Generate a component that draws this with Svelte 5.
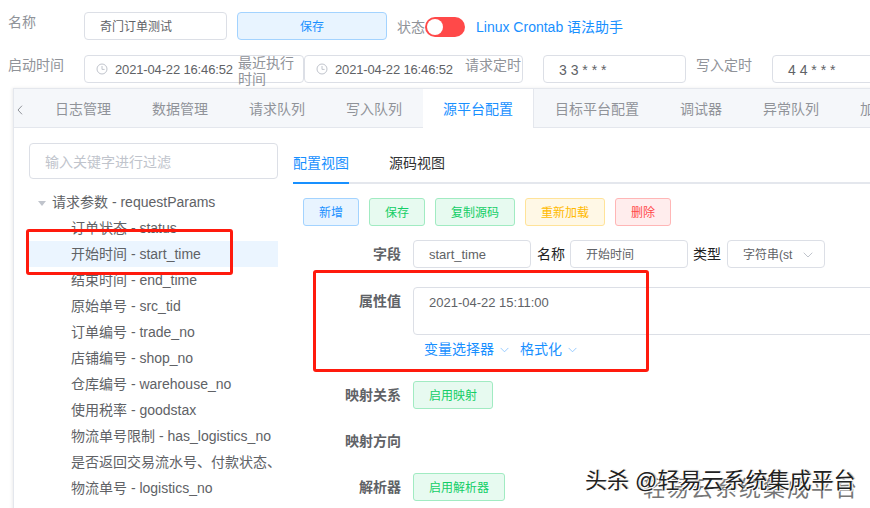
<script>
  const tabs = ['日志管理', '数据管理', '请求队列', '写入队列', '源平台配置', '目标平台配置', '调试器', '异常队列', '加密配置'];
  const activeTab = '源平台配置';
  const params = [
    '订单状态 - status',
    '开始时间 - start_time',
    '结束时间 - end_time',
    '原始单号 - src_tid',
    '订单编号 - trade_no',
    '店铺编号 - shop_no',
    '仓库编号 - warehouse_no',
    '使用税率 - goodstax',
    '物流单号限制 - has_logistics_no',
    '是否返回交易流水号、付款状态、',
    '物流单号 - logistics_no'
  ];
  const actions = [
    { text: '新增', kind: 'blue' },
    { text: '保存', kind: 'green' },
    { text: '复制源码', kind: 'green' },
    { text: '重新加载', kind: 'yellow' },
    { text: '删除', kind: 'red' }
  ];
</script>

{#snippet clock()}
  <svg class="clock" viewBox="0 0 12 12" width="12" height="12">
    <circle cx="6" cy="6" r="5" fill="none" stroke="#c0c4cc" />
    <path d="M6 3V6.4H8.6" fill="none" stroke="#c0c4cc" />
  </svg>
{/snippet}

{#snippet chevron()}
  <svg class="chev" viewBox="0 0 10 6" width="10" height="6">
    <path d="M0.7 0.7L5 5L9.3 0.7" fill="none" stroke="currentColor" />
  </svg>
{/snippet}

<main>
  <div class="row first">
    <span class="label">名称</span>
    <div class="input name">奇门订单测试</div>
    <button class="save">保存</button>
    <span class="status">状态</span>
    <span class="switch"><i></i></span>
    <a class="helper" href="#top">Linux Crontab 语法助手</a>
  </div>

  <div class="row second">
    <span class="label">启动时间</span>
    <div class="input date">
      {@render clock()}2021-04-22 16:46:52
      <span class="over two">最近执行时间</span>
    </div>
    <div class="input date next">
      {@render clock()}2021-04-22 16:46:52
      <span class="over">请求定时</span>
    </div>
    <div class="input cron">3 3 * * *</div>
    <span class="label write">写入定时</span>
    <div class="input cron last">4 4 * * *</div>
  </div>

  <section class="panel">
    <div class="tabbar">
      <svg class="prev" viewBox="0 0 6 10" width="6" height="10">
        <path d="M5 0.7L1 5L5 9.3" fill="none" stroke="#909399" />
      </svg>
      {#each tabs as tab}
        <span class="tab" class:active={tab === activeTab}>{tab}</span>
      {/each}
    </div>

    <div class="body">
      <aside>
        <div class="search">输入关键字进行过滤</div>
        <div class="node root"><i class="caret"></i>请求参数 - requestParams</div>
        {#each params as p, i}
          <div class="node" class:current={i === 1}>{p}</div>
        {/each}
      </aside>

      <div class="config">
        <div class="views">
          <span class="view on">配置视图</span>
          <span class="view">源码视图</span>
        </div>

        <div class="actions">
          {#each actions as a}
            <button class="btn {a.kind}">{a.text}</button>
          {/each}
        </div>

        <div class="field fields">
          <span class="key">字段</span>
          <div class="input small w118 latin">start_time</div>
          <span class="inline">名称</span>
          <div class="input small w118">开始时间</div>
          <span class="inline type">类型</span>
          <div class="input small select">字符串(st{@render chevron()}</div>
        </div>

        <div class="field value">
          <span class="key">属性值</span>
          <div class="valuebox">
            <div class="area">2021-04-22 15:11:00</div>
            <div class="links">
              <span>变量选择器{@render chevron()}</span>
              <span>格式化{@render chevron()}</span>
            </div>
          </div>
        </div>

        <div class="field mapping">
          <span class="key">映射关系</span>
          <button class="btn green">启用映射</button>
        </div>
        <div class="field direction">
          <span class="key">映射方向</span>
        </div>
        <div class="field parser">
          <span class="key">解析器</span>
          <button class="btn green">启用解析器</button>
        </div>
      </div>
    </div>
  </section>

  <div class="mark box-left"></div>
  <div class="mark box-right"></div>
  <div class="ghost">轻易云系统集成平台</div>
  <div class="watermark">头杀 @轻易云系统集成平台</div>
</main>

<style>
  :global(body) {
    margin: 0;
    background: #fff;
    overflow: hidden;
  }

  main {
    position: relative;
    width: 870px;
    height: 508px;
    overflow: hidden;
    font-family: "Liberation Sans", "Noto Sans CJK SC", sans-serif;
    font-size: 14px;
    color: #606266;
  }

  button {
    font: inherit;
    cursor: pointer;
  }

  .row {
    display: flex;
    align-items: flex-start;
    height: 28px;
    padding-left: 8px;
    white-space: nowrap;
  }

  .first {
    padding-top: 12px;
  }

  .second {
    margin-top: 15px;
  }

  .label {
    width: 76px;
    flex: none;
    line-height: 20px;
    color: #909399;
  }

  .input {
    position: relative;
    flex: none;
    box-sizing: border-box;
    height: 28px;
    line-height: 26px;
    border: 1px solid #dcdfe6;
    border-radius: 4px;
    background: #fff;
    display: flex;
    align-items: center;
  }

  .name {
    width: 143px;
    padding: 2px 0 0 15px;
    font-size: 12px;
  }

  .save {
    width: 150px;
    height: 28px;
    margin-left: 10px;
    padding: 0 0 2px;
    border: 1px solid #a3d3ff;
    border-radius: 4px;
    background: #e8f4ff;
    color: #1890ff;
    font-size: 12px;
  }

  .status {
    margin-left: 10px;
    line-height: 30px;
    color: #909399;
  }

  .switch {
    display: block;
    position: relative;
    width: 40px;
    height: 20px;
    margin-top: 5px;
    border-radius: 10px;
    background: #ff4949;
  }

  .switch i {
    position: absolute;
    left: 2px;
    top: 2px;
    width: 16px;
    height: 16px;
    border-radius: 50%;
    background: #fff;
  }

  .helper {
    margin-left: 11px;
    line-height: 30px;
    color: #1890ff;
    text-decoration: none;
  }

  .date {
    width: 220px;
    padding: 2px 0 0 11px;
    font-size: 13px;
    letter-spacing: -0.15px;
  }

  .next {
    width: 219px;
  }

  .clock {
    margin: -2px 7px 0 0;
    flex: none;
  }

  .over {
    position: absolute;
    right: 1px;
    top: -1px;
    width: 56px;
    font-size: 14px;
    letter-spacing: 0;
    line-height: 20px;
    color: #909399;
  }

  .over.two {
    white-space: normal;
    line-height: 16px;
    left: 153px;
    right: auto;
    width: 57px;
  }

  .cron {
    width: 143px;
    margin-left: 20px;
    padding: 1px 0 0 15px;
  }

  .write {
    width: 66px;
    margin-left: 10px;
    margin-right: 10px;
  }

  .cron.last {
    width: 140px;
    margin-left: 0;
  }

  .panel {
    box-sizing: border-box;
    width: 900px;
    height: 500px;
    margin-top: 5px;
    margin-left: 13px;
    border-left: 1px solid #e4e7ed;
    box-shadow: -1px 0 3px rgba(0, 0, 0, 0.08);
  }

  .tabbar {
    box-sizing: border-box;
    display: flex;
    height: 40px;
    padding-left: 21px;
    position: relative;
    background: #f5f7fa;
    border-top: 1px solid #e4e7ed;
    border-bottom: 1px solid #e4e7ed;
    white-space: nowrap;
  }

  .prev {
    position: absolute;
    left: 3px;
    top: 16px;
  }

  .tab {
    flex: none;
    padding: 0 20px;
    margin-right: 1px;
    line-height: 40px;
    height: 39px;
    color: #909399;
  }

  .tab.active {
    background: #fff;
    color: #1890ff;
    border-right: 1px solid #e4e7ed;
  }

  .body {
    display: flex;
  }

  aside {
    width: 249px;
    margin-left: 15px;
    flex: none;
    padding-top: 15px;
  }

  .search {
    box-sizing: border-box;
    height: 36px;
    line-height: 36px;
    padding-left: 15px;
    margin-bottom: 10px;
    border: 1px solid #dcdfe6;
    border-radius: 4px;
    color: #c0c4cc;
  }

  .node {
    height: 26px;
    line-height: 26px;
    padding-left: 42px;
    white-space: nowrap;
    overflow: hidden;
    color: #606266;
  }

  .node.root {
    padding-left: 24px;
  }

  .node.current {
    background: #ebf5ff;
  }

  .caret {
    display: inline-block;
    width: 0;
    height: 0;
    margin-left: -15px;
    margin-right: 6px;
    vertical-align: 1px;
    border-left: 4px solid transparent;
    border-right: 4px solid transparent;
    border-top: 5px solid #c0c4cc;
  }

  .config {
    flex: none;
    width: 577px;
    margin-left: 15px;
    padding-top: 15px;
  }

  .views {
    display: flex;
    gap: 40px;
    height: 39px;
    border-bottom: 2px solid #e4e7ed;
  }

  .view {
    height: 39px;
    line-height: 40px;
    color: #303133;
  }

  .view.on {
    color: #1890ff;
    border-bottom: 2px solid #1890ff;
  }

  .actions {
    display: flex;
    gap: 10px;
    margin-top: 14px;
    margin-left: 10px;
  }

  .btn {
    box-sizing: border-box;
    height: 28px;
    padding: 0 15px 2px;
    border: 1px solid;
    border-radius: 3px;
    font-size: 12px;
  }

  .blue {
    color: #1890ff;
    background: #e8f4ff;
    border-color: #a3d3ff;
  }

  .green {
    color: #13ce66;
    background: #e7faf0;
    border-color: #a1ebc2;
  }

  .yellow {
    color: #ffba00;
    background: #fff8e6;
    border-color: #ffe399;
  }

  .red {
    color: #ff4949;
    background: #ffeded;
    border-color: #ffb6b6;
  }

  .field {
    display: flex;
    align-items: flex-start;
    white-space: nowrap;
  }

  .key {
    width: 108px;
    flex: none;
    margin-right: 12px;
    text-align: right;
    line-height: 28px;
    font-weight: 600;
    color: #606266;
  }

  .fields {
    margin-top: 14px;
  }

  .small {
    font-size: 12px;
    padding: 2px 0 0 15px;
    color: #606266;
  }

  .latin {
    font-size: 13px;
  }

  .w118 {
    width: 118px;
  }

  .inline {
    line-height: 28px;
    color: #222;
    margin: 0 5px 0 6px;
  }

  .inline.type {
    margin: 0 6px 0 5px;
  }

  .select {
    width: 98px;
    position: relative;
  }

  .select .chev {
    position: absolute;
    right: 11px;
    top: 11px;
    color: #c0c4cc;
  }

  .value {
    margin-top: 19px;
  }

  .valuebox {
    flex: 1;
  }

  .area {
    box-sizing: border-box;
    width: 500px;
    height: 48px;
    padding: 5px 15px;
    line-height: 20px;
    font-size: 13px;
    border: 1px solid #dcdfe6;
    border-radius: 4px;
  }

  .links {
    display: flex;
    gap: 11px;
    margin-top: 4px;
    margin-left: 11px;
    line-height: 20px;
    color: #1890ff;
  }

  .links .chev {
    margin-left: 6px;
    vertical-align: 1px;
    color: #8cc5ff;
    width: 9px;
  }

  .mapping {
    margin-top: 22px;
  }

  .direction {
    margin-top: 18px;
    height: 28px;
  }

  .parser {
    margin-top: 18px;
  }

  .mark {
    position: absolute;
    box-sizing: border-box;
    border: 3px solid #ff1a0d;
    border-radius: 3px;
  }

  .box-left {
    left: 26px;
    top: 229px;
    width: 207px;
    height: 46px;
  }

  .box-right {
    left: 313px;
    top: 270px;
    width: 336px;
    height: 102px;
  }

  .watermark, .ghost {
    position: absolute;
    white-space: nowrap;
  }

  .watermark {
    left: 585px;
    top: 468px;
    font-size: 22px;
    line-height: 26px;
    color: #222;
    text-shadow: 1px 1px 0 #fff, -1px -1px 0 #fff, 1px 0 1px #999;
  }

  .ghost {
    left: 643px;
    top: 476px;
    font-size: 22px;
    line-height: 26px;
    letter-spacing: 2px;
    color: #777;
    text-shadow: 1px 1px 0 #fff;
  }
</style>
